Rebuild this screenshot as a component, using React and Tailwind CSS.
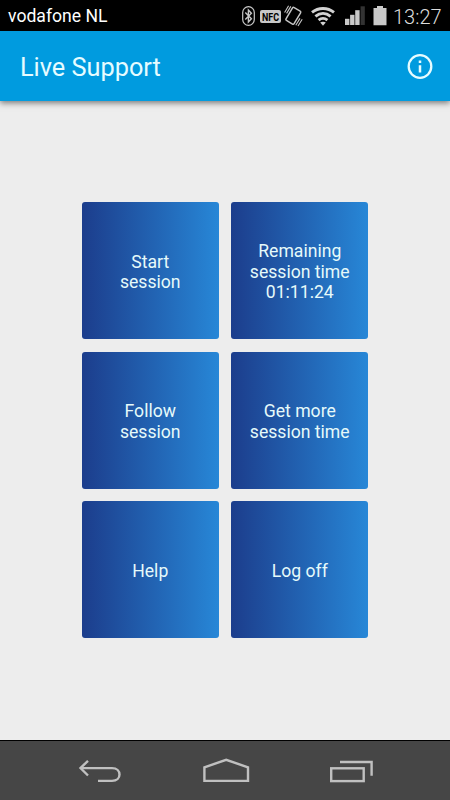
import React from 'react';

const actions = [
  { id: 'start', lines: ['Start', 'session'] },
  { id: 'remaining', lines: ['Remaining', 'session time', '01:11:24'] },
  { id: 'follow', lines: ['Follow', 'session'] },
  { id: 'more', lines: ['Get more', 'session time'] },
  { id: 'help', lines: ['Help'] },
  { id: 'logoff', lines: ['Log off'] }
];

const BluetoothIcon = () => (
  <svg width="13" height="20" viewBox="0 0 13 20" fill="none" stroke="#c8c8c8">
    <rect x="0.7" y="0.7" width="11.6" height="18.6" rx="5.8" strokeWidth="1.2" />
    <path d="M3.3 6.6 9.4 12.8 6.4 16V4L9.4 7.2 3.3 13.4" strokeWidth="1.4" />
  </svg>
);

const NfcIcon = () => (
  <svg width="21" height="13" viewBox="0 0 21 13" className="overflow-visible">
    <rect width="21" height="13" rx="2" fill="#c8c8c8" />
    <text x="2" y="10.6" textLength="17" lengthAdjust="spacingAndGlyphs" className="text-[11.5px] font-bold">
      NFC
    </text>
  </svg>
);

const VibrateIcon = () => (
  <svg width="19" height="22" viewBox="0 0 19 22" fill="none" stroke="#c4c4c4">
    <rect x="4.6" y="3.3" width="9.4" height="15" rx="1.2" transform="rotate(31 9.3 10.8)" strokeWidth="1.5" />
    <path d="M0.6 7.5 4.6 0.8M2.6 8.4 6.8 1.4M11.8 20.2 16 13.4M14 21 18.2 14.2" strokeWidth="1.1" />
  </svg>
);

const WifiIcon = () => (
  <svg width="24" height="19" viewBox="0 0 24 19" fill="none" stroke="#d2d2d2" strokeWidth="2.9">
    <path d="M1 5.4C7.4 0.2 16.6 0.2 23 5.4" />
    <path d="M4.4 9.4C9 5.6 15 5.6 19.6 9.4" />
    <path d="M7.6 13.2C10.2 11 13.8 11 16.4 13.2" />
    <path d="M12 18.8 9.2 15.6C10.9 14.4 13.1 14.4 14.8 15.6Z" fill="#d2d2d2" stroke="none" />
  </svg>
);

const SignalIcon = () => (
  <svg width="20" height="20" viewBox="0 0 20 20" fill="#cacaca">
    <rect x="0" y="12.8" width="4.4" height="6.2" />
    <rect x="5.1" y="8.8" width="4.4" height="10.2" />
    <rect x="10.2" y="4.2" width="4.4" height="14.8" />
    <rect x="15.6" y="0.3" width="4.2" height="18.7" fill="#333" />
  </svg>
);

const BatteryIcon = () => (
  <svg width="14" height="20" viewBox="0 0 14 20" fill="#cacaca">
    <path d="M4 0H10V2H13.5V19.2H0.5V2H4Z" />
  </svg>
);

const StatusBar = () => (
  <div className="flex h-[31px] shrink-0 items-center bg-black pt-0.5 pl-2 text-white">
    <span className="w-[234px] pt-px text-[17.6px] leading-none">vodafone NL</span>
    <span className="-mt-px">
      <BluetoothIcon />
    </span>
    <span className="ml-[5px]">
      <NfcIcon />
    </span>
    <span className="-mt-px ml-[3px]">
      <VibrateIcon />
    </span>
    <span className="-mt-px ml-[8px]">
      <WifiIcon />
    </span>
    <span className="-mt-px ml-[10px]">
      <SignalIcon />
    </span>
    <span className="-mt-px ml-2">
      <BatteryIcon />
    </span>
    <span className="ml-[6px] text-[20px] leading-none font-light text-[#dcdcdc]">13:27</span>
  </div>
);

const Header = () => (
  <header className="z-10 flex h-[70px] shrink-0 items-center justify-between bg-[#009bdf] pt-0.5 pr-[17px] pl-5 shadow-[0_2px_6px_rgba(0,0,0,0.5)]">
    <h1 className="pt-0.5 text-[25.3px] leading-none text-[#e6fcff]">Live Support</h1>
    <button title="Information">
      <svg width="26" height="26" viewBox="0 0 26 26" fill="none" stroke="#e6fcff" strokeWidth="2.3">
        <circle cx="13" cy="12.5" r="11.3" />
        <path d="M13 11.2V18.6M13 6.6V9.1" strokeWidth="2.5" />
      </svg>
    </button>
  </header>
);

const NavigationBar = () => (
  <nav className="flex h-[60px] shrink-0 items-center justify-between border-t border-black bg-[#464646] pt-px pr-[76px] pl-[77px]">
    <button title="Back">
      <svg width="46" height="28" viewBox="0 0 46 28" fill="none" stroke="#c0c0c0" strokeWidth="2.4">
        <path d="M4 11.1H35C45 11.1 45 23.9 35 23.9H21" />
        <path d="M11 3.8 3.5 11.1 11 18.5" />
      </svg>
    </button>
    <button title="Home">
      <svg width="48" height="28" viewBox="0 0 48 28" fill="none" stroke="#c0c0c0" strokeWidth="2.4">
        <path d="M1.4 23.9V10.3L23.2 2.8 45 10.3V23.9Z" />
      </svg>
    </button>
    <button title="Recent apps">
      <svg width="44" height="28" viewBox="0 0 44 28" fill="none" stroke="#c0c0c0" strokeWidth="2.4">
        <rect x="1.2" y="11.3" width="32.5" height="12.8" />
        <path d="M10 5H41.6V18.8" />
      </svg>
    </button>
  </nav>
);

const ActionTile = ({ lines }) => (
  <button className="flex flex-col items-center justify-center rounded-[3px] bg-linear-to-r from-[#1c3d8c] to-[#2787d7] pt-[3px] text-[17.6px] leading-[20.5px] text-[#e6fafa]">
    {lines.map((line) => (
      <span key={line}>{line}</span>
    ))}
  </button>
);

const App = () => {
  return (
    <div className="flex h-[800px] w-[450px] flex-col overflow-hidden bg-[#ededed] font-[Roboto,sans-serif]">
      <StatusBar />
      <Header />
      <main className="flex flex-1 items-center justify-center pb-px">
        <div className="grid auto-rows-[137px] grid-cols-[137px_137px] gap-[12.5px]">
          {actions.map((action) => (
            <ActionTile key={action.id} lines={action.lines} />
          ))}
        </div>
      </main>
      <NavigationBar />
    </div>
  );
};

export default App;
